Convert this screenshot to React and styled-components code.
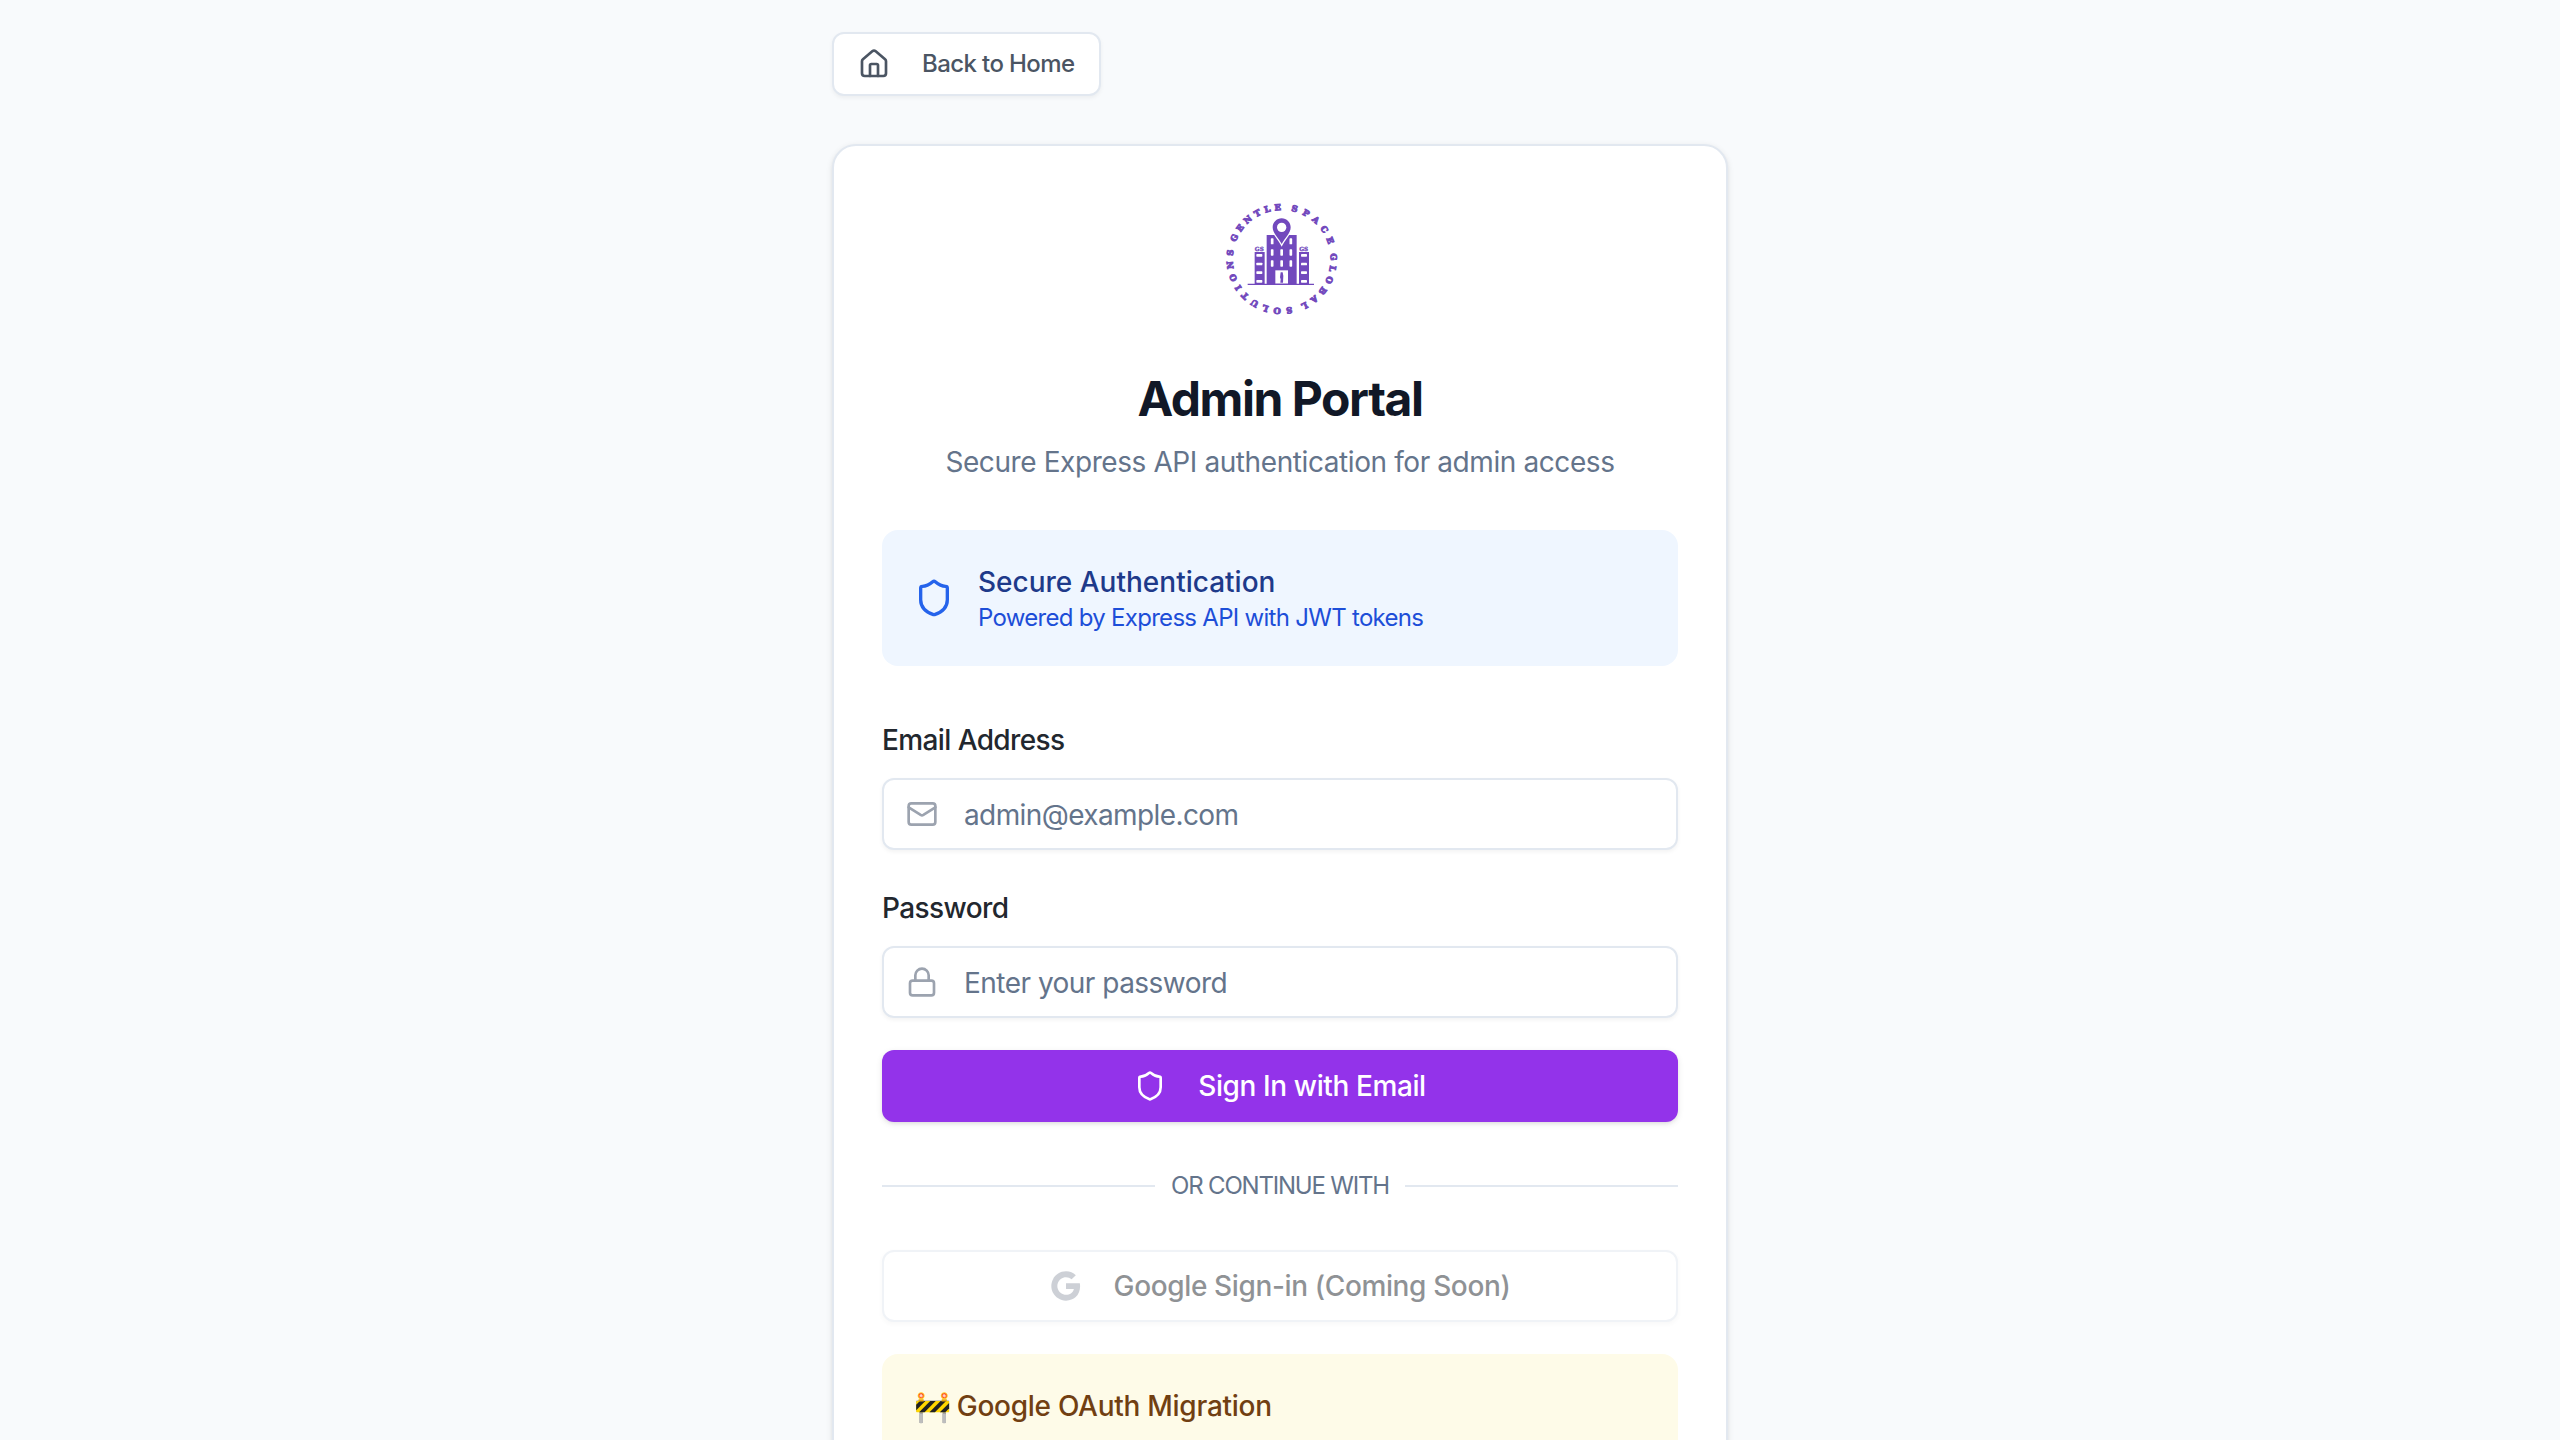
import React from "react";
import styled, { createGlobalStyle } from "styled-components";
import { House, Shield, Mail, Lock } from "lucide-react";

const BRAND = "#7249bd";

const Global = createGlobalStyle`
  *, *::before, *::after { box-sizing: border-box; }
  html, body { margin: 0; height: 100%; overflow: hidden; background: #f8fafc; }
  body {
    font-family: Inter, "Noto Sans", sans-serif;
    font-size: 28px;
    line-height: 40px;
    color: #1f2937;
  }
`;

const Page = styled.main`
  height: 100vh;
  overflow: hidden;
  display: flex;
  justify-content: center;
  padding-top: 32px;
  background: #f8fafc;
`;

const Column = styled.div`
  width: 896px;
  display: flex;
  flex-direction: column;
  align-items: stretch;
  flex-shrink: 0;
`;

const BackButton = styled.button`
  align-self: flex-start;
  flex-shrink: 0;
  display: flex;
  align-items: center;
  gap: 32px;
  height: 64px;
  width: 269px;
  padding: 0 24px;
  border: 2px solid #e2e8f0;
  border-radius: 12px;
  background: #fff;
  box-shadow: 0 2px 4px rgba(0, 0, 0, 0.05);
  color: #4b5563;
  font: 500 24px/32px Inter, sans-serif;
  letter-spacing: -0.6px;
  white-space: nowrap;
`;

const Card = styled.section`
  flex-shrink: 0;
  margin-top: 48px;
  min-height: 1500px;
  padding: 48px;
  border: 2px solid #e2e8f0;
  border-radius: 24px;
  background: #fff;
  box-shadow: 0 2px 6px rgba(0, 0, 0, 0.1), 0 2px 4px -2px rgba(0, 0, 0, 0.1);
  display: flex;
  flex-direction: column;
`;

const Emblem = styled.svg`
  width: 128px;
  height: 128px;
  align-self: center;
`;

const Title = styled.h1`
  margin: 45px 0 0;
  text-align: center;
  font-size: 48px;
  line-height: 64px;
  font-weight: 700;
  letter-spacing: -1.45px;
  color: #111827;
`;

const Subtitle = styled.p`
  margin: 11px 0 48px;
  text-align: center;
  letter-spacing: -0.41px;
  color: #64748b;
`;

const Notice = styled.div`
  display: flex;
  align-items: center;
  gap: 24px;
  padding: 32px;
  border-radius: 16px;
  background: #eff6ff;
  color: #2563eb;
`;

const NoticeTitle = styled.div`
  font-weight: 500;
  color: #1e3a8a;
`;

const NoticeText = styled.div`
  font-size: 24px;
  line-height: 32px;
  letter-spacing: -0.71px;
  color: #1d4ed8;
`;

const Field = styled.div`
  display: flex;
  flex-direction: column;
  gap: 18px;
  margin-top: ${(p) => p.$top}px;
`;

const Label = styled.label`
  font-weight: 500;
  letter-spacing: -0.6px;
  color: #22272e;
`;

const InputBox = styled.div`
  display: flex;
  align-items: center;
  gap: 26px;
  height: 72px;
  padding: 0 22px;
  border: 2px solid #e2e8f0;
  border-radius: 12px;
  background: #fff;
  box-shadow: 0 2px 4px rgba(0, 0, 0, 0.05);
  color: #9ca3af;
`;

const Input = styled.input`
  flex: 1;
  min-width: 0;
  padding: 2px 0 0;
  border: 0;
  outline: 0;
  background: transparent;
  font: 400 28px/40px Inter, sans-serif;
  letter-spacing: ${(p) => p.$track}px;
  &::placeholder {
    color: #64748b;
    opacity: 1;
  }
`;

const Button = styled.button`
  display: flex;
  align-items: center;
  justify-content: center;
  gap: 32px;
  height: 72px;
  flex-shrink: 0;
  padding: 0;
  border-radius: 12px;
  font: 500 28px/40px Inter, sans-serif;
  box-shadow: 0 2px 4px rgba(0, 0, 0, 0.05);
`;

const PrimaryButton = styled(Button)`
  margin-top: 32px;
  border: 0;
  background: #9333ea;
  color: #fff;
  font-weight: 500;
  letter-spacing: -0.4px;
  box-shadow: 0 2px 6px rgba(0, 0, 0, 0.1), 0 2px 4px -2px rgba(0, 0, 0, 0.1);
`;

const GoogleButton = styled(Button)`
  border: 2px solid #e2e8f0;
  background: #fff;
  color: #22272e;
  letter-spacing: -0.37px;
  opacity: 0.5;
`;

const Divider = styled.div`
  display: flex;
  align-items: center;
  gap: 16px;
  margin: 48px 0;
  font-size: 24px;
  line-height: 32px;
  letter-spacing: -1.2px;
  color: #64748b;
  &::before,
  &::after {
    content: "";
    flex: 1;
    height: 2px;
    background: #e2e8f0;
  }
`;

const Migration = styled.div`
  display: flex;
  align-items: flex-start;
  gap: 6px;
  margin-top: 32px;
  padding: 32px;
  height: 240px;
  border-radius: 16px;
  background: #fefbe8;
  color: #713f12;
  font-weight: 500;
  letter-spacing: -0.27px;
`;

const Emoji = styled.span`
  font-size: 30px;
`;

const ring = "M 68 207 a 147 147 0 0 1 294 0 a 147 147 0 0 1 -294 0 a 147 147 0 0 1 294 0";
const words = [
  { text: "GENTLE", start: 51, length: 178 },
  { text: "SPACE", start: 259, length: 158 },
  { text: "GLOBAL", start: 445, length: 189 },
  { text: "SOLUTIONS", start: 662, length: 288 },
];

function Logo() {
  return (
    <Emblem viewBox="18 12 384 384" fill={BRAND}>
      <path id="ring" d={ring} fill="none" />
      <g fontFamily="DejaVu Serif, serif" fontWeight="700" fontSize="25" stroke={BRAND} strokeWidth="3">
        {words.map((w) => (
          <text key={w.text}>
            <textPath href="#ring" startOffset={w.start} textLength={w.length}>
              {w.text}
            </textPath>
          </text>
        ))}
      </g>
      <path d="M170 135h90v147h-90z" />
      <path
        d="M215 85c-15 0-27 12-27 27 0 18 17 31 27 50 10-19 27-32 27-50 0-15-12-27-27-27z"
        stroke="#fff"
        strokeWidth="8"
        paintOrder="stroke"
      />
      <circle cx="215" cy="112" r="14" fill="#fff" />
      <path d="M134 186h30v96h-30zM267 186h30v96h-30z" />
      <g fill="#fff">
        {[182.5, 238.5].map((x) => (
          <rect key={x} x={x} y="145" width="8" height="18" rx="2" />
        ))}
        {[178, 211].map((y) =>
          [182.5, 211, 238.5].map((x) => <rect key={`${x}-${y}`} x={x} y={y} width="8" height="19" rx="2" />)
        )}
        {[192, 218, 244, 270].map((y) =>
          [139, 273].map((x) => <rect key={`${x}-${y}`} x={x} y={y} width="18" height="8" rx="2" />)
        )}
        <path d="M196 241h38v40h-38z" />
      </g>
      <path d="M212 247h6l2 10-1 21h-8l1-10-2-6z" />
      <path d="M113 281h199v4H113z" />
      <g
        fontFamily="DejaVu Serif, serif"
        fontWeight="700"
        fontSize="17"
        textAnchor="middle"
        stroke={BRAND}
        strokeWidth="0.9"
      >
        <text x="148" y="183">GS</text>
        <text x="281" y="183">GS</text>
      </g>
    </Emblem>
  );
}

function GoogleMark() {
  return (
    <svg width="32" height="32" viewBox="0 0 24 24" fill="#9ca3af">
      <path d="M22.56 12.25c0-.78-.07-1.53-.2-2.25H12v4.26h5.92c-.26 1.37-1.04 2.53-2.21 3.31v2.77h3.57c2.08-1.92 3.28-4.74 3.28-8.09z" />
      <path d="M12 23c2.97 0 5.46-.98 7.28-2.66l-3.57-2.77c-.98.66-2.23 1.06-3.71 1.06-2.86 0-5.29-1.93-6.16-4.53H2.18v2.84C3.99 20.53 7.7 23 12 23z" />
      <path d="M5.84 14.09c-.22-.66-.35-1.36-.35-2.09s.13-1.43.35-2.09V7.07H2.18C1.43 8.55 1 10.22 1 12s.43 3.45 1.18 4.93l2.85-2.22.81-.62z" />
      <path d="M12 5.38c1.62 0 3.06.56 4.21 1.64l3.15-3.15C17.45 2.09 14.97 1 12 1 7.7 1 3.99 3.47 2.18 7.07l3.66 2.84c.87-2.6 3.3-4.53 6.16-4.53z" />
    </svg>
  );
}

export default function App() {
  return (
    <>
      <Global />
      <Page>
        <Column>
          <BackButton>
            <House size={32} />
            Back to Home
          </BackButton>
          <Card>
            <Logo />
            <Title>Admin Portal</Title>
            <Subtitle>Secure Express API authentication for admin access</Subtitle>
            <Notice>
              <Shield size={40} />
              <div>
                <NoticeTitle>Secure Authentication</NoticeTitle>
                <NoticeText>Powered by Express API with JWT tokens</NoticeText>
              </div>
            </Notice>
            <Field $top={54}>
              <Label htmlFor="email">Email Address</Label>
              <InputBox>
                <Mail size={32} />
                <Input id="email" type="email" placeholder="admin@example.com" $track={-0.6} />
              </InputBox>
            </Field>
            <Field $top={38}>
              <Label htmlFor="password">Password</Label>
              <InputBox>
                <Lock size={32} />
                <Input id="password" type="password" placeholder="Enter your password" $track={-0.52} />
              </InputBox>
            </Field>
            <PrimaryButton>
              <Shield size={32} />
              Sign In with Email
            </PrimaryButton>
            <Divider>OR CONTINUE WITH</Divider>
            <GoogleButton disabled>
              <GoogleMark />
              Google Sign-in (Coming Soon)
            </GoogleButton>
            <Migration>
              <Emoji>🚧</Emoji>
              <span>Google OAuth Migration</span>
            </Migration>
          </Card>
        </Column>
      </Page>
    </>
  );
}
